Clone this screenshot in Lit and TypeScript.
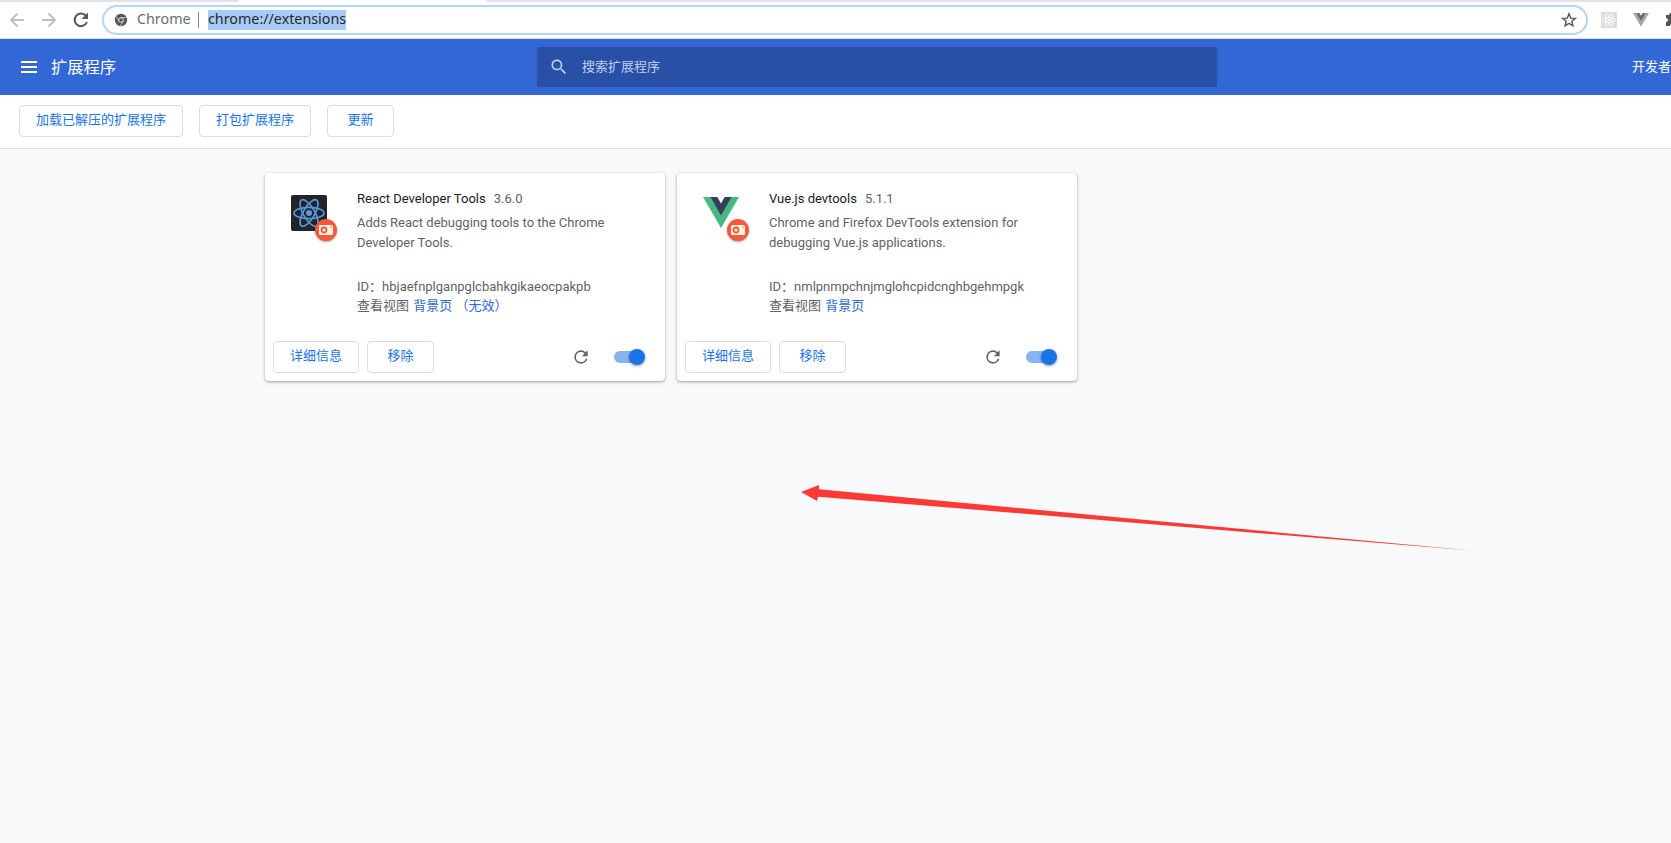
import { LitElement, html, css, svg } from "lit";
import { customElement, property } from "lit/decorators.js";

const reload = html`<svg width="24" height="24" viewBox="0 0 24 24" fill="currentColor"><path d="M17.65 6.35A7.96 7.96 0 0 0 12 4a8 8 0 1 0 7.73 10h-2.08A6 6 0 1 1 12 6c1.66 0 3.14.69 4.22 1.78L13 11h7V4z"/></svg>`;

const reactRings = svg`<g fill="none" stroke="currentColor" stroke-width="1.7"><ellipse cx="18" cy="18" rx="15" ry="5.7"/><ellipse cx="18" cy="18" rx="15" ry="5.7" transform="rotate(60 18 18)"/><ellipse cx="18" cy="18" rx="15" ry="5.7" transform="rotate(120 18 18)"/></g><circle cx="18" cy="18" r="3" fill="currentColor"/>`;

const reactLogo = html`<svg width="36" height="36" viewBox="0 0 36 36" color="#539bdc"><rect width="36" height="36" rx="2" fill="#242329"/>${reactRings}</svg>`;

const vueLogo = html`<svg width="36" height="36" viewBox="0 0 36 36"><path d="M0 2h8l10 17L28 2h8L18 33z" fill="#47b784"/><path d="M7.5 2h6.8L18 8.500 21.700 2h6.800L18 20.500z" fill="#35405b"/></svg>`;

interface Extension {
  name: string; version: string; desc: string; id: string; idle: boolean; logo: unknown;
}

@customElement("extension-card")
export class ExtensionCard extends LitElement {
  @property({ attribute: false }) item!: Extension;

  static styles = css`
    :host { display: flex; flex-direction: column; width: 400px; height: 208px; box-sizing: border-box; background: #fff; border-radius: 4px;
      box-shadow: 0 1px 2px rgba(60,64,67,.3), 0 1px 3px 1px rgba(60,64,67,.15); font-size: 13px; color: #5f6368; }
    .main { display: flex; flex: 1; padding: 16px 20px 0 26px; }
    .icon { position: relative; width: 36px; height: 36px; margin: 6px 30px 0 0; flex: none; }
    .icon svg { display: block; }
    .badge { position: absolute; left: 24px; top: 24px; width: 22px; height: 22px; border-radius: 50%; background: #f4583e; box-shadow: 0 1px 2px rgba(0,0,0,.35); }
    .title { line-height: 20px; color: #202124; }
    .version { color: #5f6368; margin-left: 8px; }
    .desc { line-height: 20px; margin-top: 4px; height: 64px; white-space: pre-line; }
    .id { line-height: 20px; white-space: nowrap; }
    .views { line-height: 18px; white-space: nowrap; }
    .link { color: #3367d6; margin-left: 1px; }
    .actions { display: flex; align-items: center; padding: 0 20px 8px 8px; height: 32px; }
    .btn { box-sizing: border-box; height: 32px; line-height: 28px; border: 1px solid #dadce0; border-radius: 4px; margin-right: 8px; color: #1a73e8; text-align: center; }
    .btn.wide { width: 86px; }
    .btn.short { width: 67px; }
    .reload { margin-left: auto; width: 20px; height: 20px; margin-right: 23px; }
    .reload svg { width: 20px; height: 20px; display: block; }
    .toggle { position: relative; width: 28px; height: 12px; border-radius: 6px; background: #84b4f1; margin-right: 3px; }
    .knob { position: absolute; right: -3px; top: -2px; width: 16px; height: 16px; border-radius: 50%; background: #1a73e8; box-shadow: 0 1px 3px rgba(0,0,0,.4); }
  `;

  render() {
    const e = this.item;
    return html`
      <div class="main">
        <div class="icon">${e.logo}
          <div class="badge"><svg width="22" height="22" viewBox="0 0 22 22"><rect x="4" y="6" width="14" height="10" rx="1.500" fill="#fff4df"/><circle cx="9" cy="11" r="2.500" fill="#fff4df" stroke="#f4583e" stroke-width="1.800"/><circle cx="16" cy="8" r=".8" fill="#f4583e"/></svg></div>
        </div>
        <div class="text">
          <div class="title">${e.name}<span class="version">${e.version}</span></div>
          <div class="desc">${e.desc}</div>
          <div class="id">ID：${e.id}</div>
          <div class="views">查看视图 <span class="link">背景页${e.idle ? html` （无效）` : ""}</span></div>
        </div>
      </div>
      <div class="actions">
        <div class="btn wide">详细信息</div><div class="btn short">移除</div>
        <div class="reload">${reload}</div>
        <div class="toggle"><div class="knob"></div></div>
      </div>`;
  }
}

@customElement("app-root")
export class AppRoot extends LitElement {
  static styles = css`
    :host { display: flex; flex-direction: column; width: 100%; height: 843px; overflow: hidden; position: relative; background: #f8f9fb;
      font-family: Roboto, "Noto Sans CJK SC", sans-serif; font-size: 13px; }
    svg { display: block; flex: none; }
    .tabs { display: flex; justify-content: space-between; height: 2px; background: #fff; flex: none; }
    .tab-left { width: 239px; background: #dfe1e5; border-bottom-right-radius: 4px; }
    .tab-right { width: 1185px; background: #dfe1e5; border-bottom-left-radius: 4px; }
    .browser { display: flex; align-items: center; height: 37px; box-sizing: border-box; padding: 0 0 1px 5px; background: #fff; border-bottom: 1px solid #d9dbdf; flex: none; color: #5a5a5f; }
    .browser .nav { margin-right: 8px; }
    .dim { color: #bdbfc0; }
    .omni { display: flex; align-items: center; box-sizing: border-box; width: 1486px; height: 30px; margin-left: 1px; border: 2px solid #b3d4fa; border-radius: 15px; padding: 0 9px 0 10px; font: 14.300px/18px "Noto Sans", sans-serif; color: #6a6b70; flex: none; }
    .site { margin-left: 9px; width: 54px; padding-bottom: 1px; }
    .bar { width: 1px; height: 16px; background: #888; margin: 0 9px 0 7px; }
    .url { background: #a8cbf8; color: #26282c; height: 20px; width: 138px; white-space: nowrap; }
    .star { margin-left: auto; }
    .ext { margin-left: 13px; }
    .ext + .ext { margin-left: 16px; }
    .header { display: flex; align-items: center; height: 56px; flex: none; background: #3367d6; color: #fff; }
    .menu { width: 16px; height: 12px; box-sizing: border-box; border-top: 2px solid #fff; border-bottom: 2px solid #fff; margin: 0 14px 0 21px; display: flex; align-items: center; flex: none; }
    .menu-line { width: 16px; height: 2px; background: #fff; }
    .heading { font-size: 16.300px; line-height: 24px; width: 486px; padding-top: 2px; flex: none; }
    .search { display: flex; align-items: center; width: 680px; height: 40px; border-radius: 2px; background: #2850a7; color: #bfd0ef; flex: none; }
    .search svg { margin: 0 13px 0 12px; }
    .search-text { padding-bottom: 3px; }
    .dev { margin-left: 415px; white-space: nowrap; padding-bottom: 3px; }
    .toolbar { display: flex; gap: 16px; padding: 10px 19px 0; height: 43px; background: #fff; border-bottom: 1px solid #dadce0; flex: none; }
    .tool { box-sizing: border-box; height: 32px; line-height: 28px; border: 1px solid #dadce0; border-radius: 4px; color: #1a73e8; text-align: center; }
    .load { width: 164px; } .pack { width: 112px; } .update { width: 67px; }
    .cards { display: flex; gap: 12px; padding: 24px 0 0 265px; }
    .arrow { position: absolute; left: 801px; top: 484px; }
  `;

  private items: Extension[] = [
    { name: "React Developer Tools", version: "3.6.0", desc: "Adds React debugging tools to the Chrome\nDeveloper Tools.", id: "hbjaefnplganpglcbahkgikaeocpakpb", idle: true, logo: reactLogo },
    { name: "Vue.js devtools", version: "5.1.1", desc: "Chrome and Firefox DevTools extension for\ndebugging Vue.js applications.", id: "nmlpnmpchnjmglohcpidcnghbgehmpgk", idle: false, logo: vueLogo },
  ];

  render() {
    return html`
      <div class="tabs"><div class="tab-left"></div><div class="tab-right"></div></div>
      <div class="browser">
        <svg class="nav dim" width="24" height="24" viewBox="0 0 24 24" fill="none" stroke="currentColor" stroke-width="1.900"><path d="M19 12H6M12.500 5.500 6 12l6.500 6.500"/></svg>
        <svg class="nav dim" width="24" height="24" viewBox="0 0 24 24" fill="none" stroke="currentColor" stroke-width="1.900"><path d="M5 12h13M11.500 5.500 18 12l-6.500 6.500"/></svg>
        <svg class="nav" width="24" height="24" viewBox="0 0 24 24" fill="none" stroke="currentColor" stroke-width="2.100"><path d="M17.200 8.200A6.300 6.300 0 1 0 17.900 14"/><path d="M19 4.500v6.500h-6.500z" fill="currentColor" stroke="none"/></svg>
        <div class="omni">
          <svg width="14" height="14" viewBox="0 0 14 14"><circle cx="7" cy="7" r="6.200" fill="#55565c"/><circle cx="7" cy="7" r="2.300" fill="#55565c" stroke="#fff" stroke-width=".8"/><path d="M7 4.600h5.800M4.900 8.200 2 3.400M9.200 8.200l-2.800 4.900" stroke="#fff" stroke-width=".6"/></svg>
          <div class="site">Chrome</div><div class="bar"></div><div class="url">chrome://extensions</div>
          <svg class="star" width="16" height="16" viewBox="0 0 16 16" fill="none" stroke="#55565c" stroke-width="1.400"><path d="m8 1.800 1.700 4.300 4.600.3-3.500 2.900 1.100 4.500L8 11.300l-3.900 2.500 1.100-4.500-3.500-2.900 4.600-.3z"/></svg>
        </div>
        <svg class="ext" width="16" height="16" viewBox="0 0 36 36" color="#fff"><rect width="36" height="36" rx="2" fill="#dadbdd"/>${reactRings}</svg>
        <svg class="ext" width="16" height="16" viewBox="0 0 36 36"><path d="M0 2h8l10 17L28 2h8L18 33z" fill="#a5a5a5"/><path d="M7.500 2h6.800L18 8.500 21.700 2h6.800L18 20.500z" fill="#686868"/></svg>
        <svg class="ext" width="16" height="16" viewBox="0 0 16 16" fill="#55565c"><path d="M1 3h3a2 2 0 0 1 4 0h5v4a2 2 0 0 1 0 4v3H9a2 2 0 0 0-4 0H1v-4a2 2 0 0 0 0-4z"/></svg>
      </div>
      <div class="header">
        <div class="menu"><div class="menu-line"></div></div>
        <div class="heading">扩展程序</div>
        <div class="search"><svg width="20" height="20" viewBox="0 0 24 24" fill="currentColor"><path d="M15.500 14h-.8l-.3-.3A6.500 6.500 0 1 0 13.700 14.400l.3.300v.8l5 5 1.500-1.500zM9.500 14a4.500 4.500 0 1 1 0-9 4.500 4.500 0 0 1 0 9z"/></svg><div class="search-text">搜索扩展程序</div></div>
        <div class="dev">开发者模式</div>
      </div>
      <div class="toolbar"><div class="tool load">加载已解压的扩展程序</div><div class="tool pack">打包扩展程序</div><div class="tool update">更新</div></div>
      <div class="cards">${this.items.map((i) => html`<extension-card .item=${i}></extension-card>`)}</div>
      <svg class="arrow" width="674" height="68" viewBox="0 0 674 68"><path d="M0 8 18 1v4.300L673 66.800 17 12.700 16 17z" fill="#fd3935"/></svg>`;
  }
}
